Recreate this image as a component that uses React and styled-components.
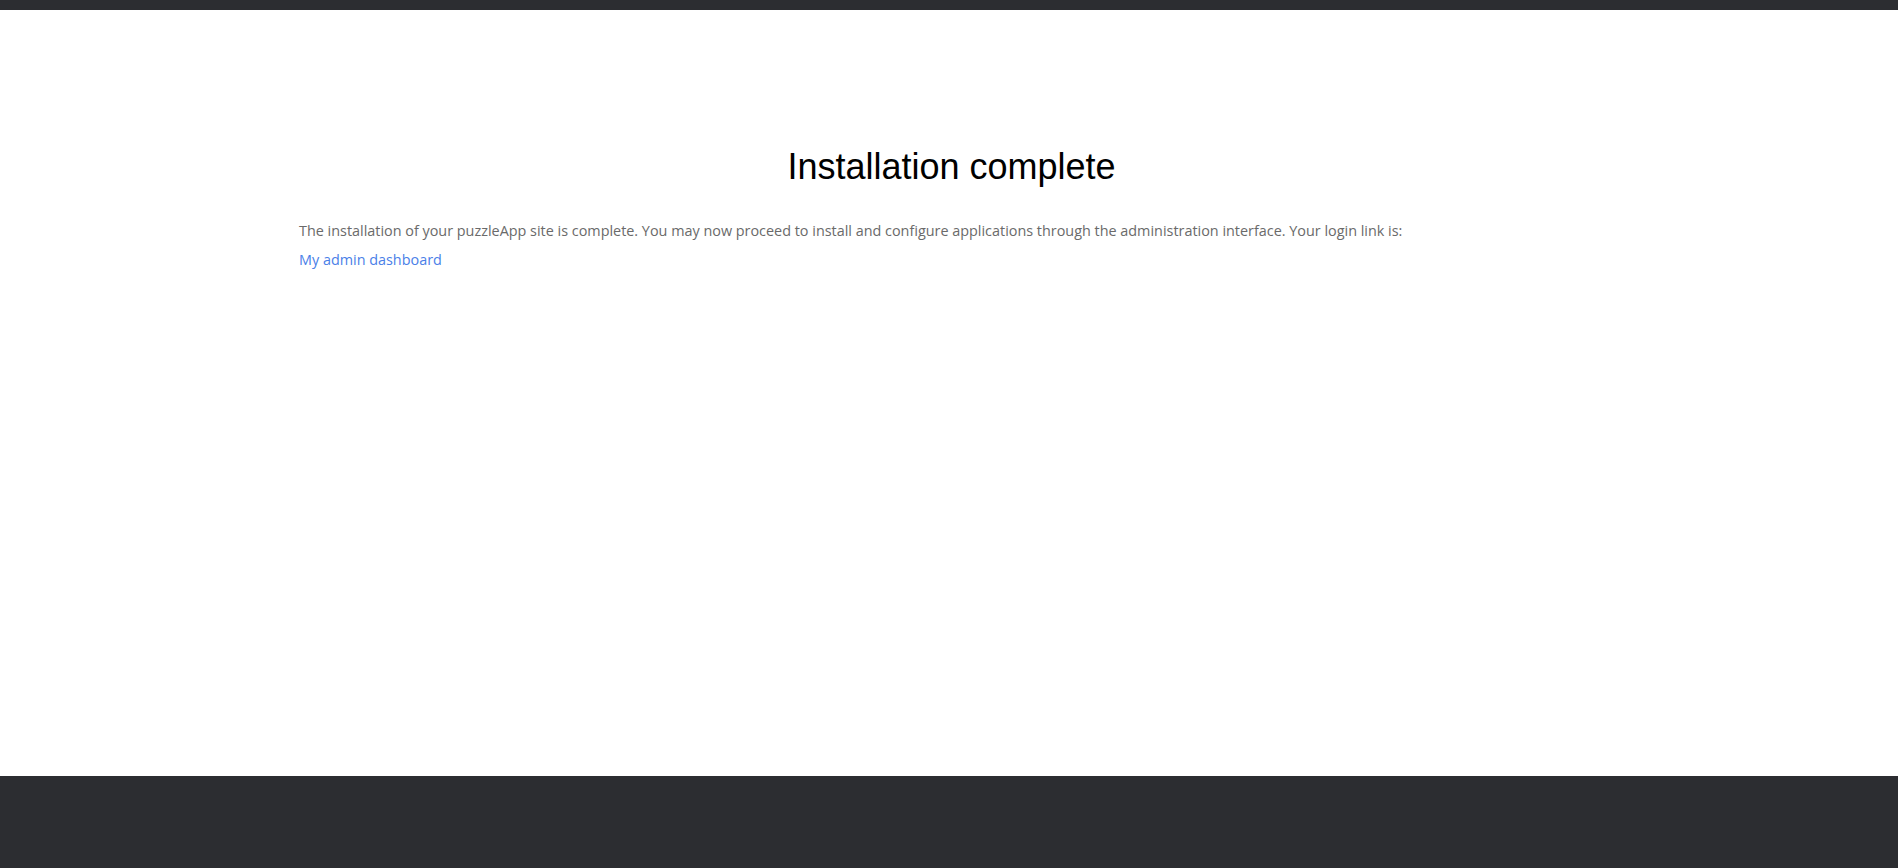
import React from 'react';
import styled, { createGlobalStyle } from 'styled-components';

const GlobalStyle = createGlobalStyle`
  html, body {
    margin: 0;
    padding: 0;
    background: #ffffff;
  }
`;

const StyledPage = styled.div`
  display: flex;
  flex-direction: column;
  min-height: 868px;
`;

const StyledTopBar = styled.div`
  height: 10px;
  background: #2c2d31;
`;

const StyledMain = styled.main`
  height: 766px;
  display: flex;
  justify-content: center;
`;

const StyledContent = styled.div`
  width: 1300px;
  padding-top: 137px;
`;

const StyledTitle = styled.h1`
  margin: 0 0 29px 0;
  padding-left: 5px;
  font-family: 'Liberation Sans', Arial, sans-serif;
  font-size: 36px;
  font-weight: 400;
  line-height: 40px;
  color: #000000;
  text-align: center;
`;

const StyledText = styled.p`
  margin: 0;
  font-family: 'Open Sans', 'Noto Sans', sans-serif;
  font-size: 14.4px;
  line-height: 29px;
  color: #6a6a6a;
`;

const StyledLink = styled.a`
  color: #4a80e8;
  text-decoration: none;
`;

const StyledFooter = styled.footer`
  flex: 1;
  min-height: 92px;
  background: #2c2d31;
`;

const App = () => {
  return (
    <>
      <GlobalStyle />
      <StyledPage>
        <StyledTopBar />
        <StyledMain>
          <StyledContent>
            <StyledTitle>Installation complete</StyledTitle>
            <StyledText>
              The installation of your puzzleApp site is complete. You may now proceed to install and configure applications through the administration interface. Your login link is:
            </StyledText>
            <StyledText>
              <StyledLink href="#">My admin dashboard</StyledLink>
            </StyledText>
          </StyledContent>
        </StyledMain>
        <StyledFooter />
      </StyledPage>
    </>
  );
};

export default App;
